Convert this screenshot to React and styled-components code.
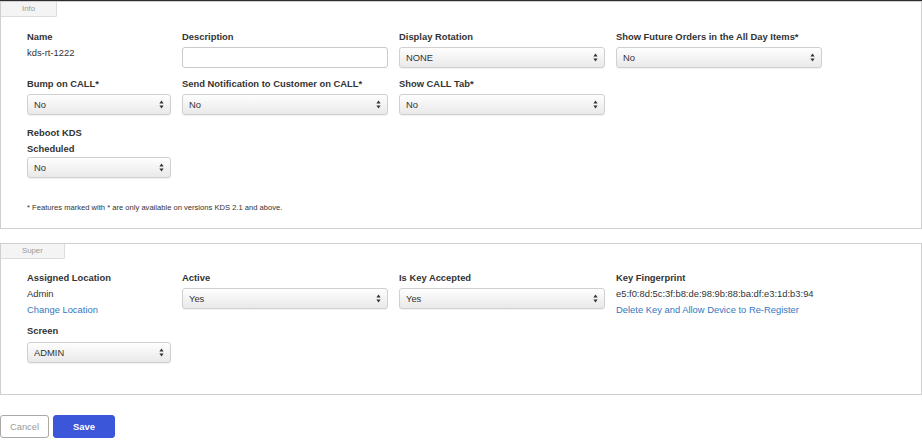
import React from 'react'
import styled, { createGlobalStyle } from 'styled-components'

const GlobalStyle = createGlobalStyle`
  html, body {
    margin: 0;
    padding: 0;
    background: #fff;
  }
  body {
    font-family: 'Liberation Sans', Arial, Helvetica, sans-serif;
    font-size: 9.4px;
    color: #333;
  }
`

const Page = styled.div`
  border-top: 1px solid #2b2d31;
  width: 922px;
  box-sizing: border-box;
`
const Panel = styled.section`
  border: 1px solid #cfcfcf;
  margin-top: ${(props) => props.top || 0}px;
  background: #fff;
`
const Tab = styled.div`
  display: inline-block;
  height: 14px;
  line-height: 14px;
  padding: 0 21px;
  background: #f4f4f4;
  border-right: 1px solid #dcdcdc;
  border-bottom: 1px solid #dcdcdc;
  border-bottom-right-radius: 2px;
  color: #9a9a9a;
  font-size: 7.8px;
  vertical-align: top;
`
const Body = styled.div`
  padding: ${(props) => props.pt}px 0 ${(props) => props.pb}px 26px;
`
const Row = styled.div`
  display: grid;
  grid-template-columns: 144px 206px 206px 206px;
  column-gap: 11px;
  align-items: start;
  margin-top: ${(props) => props.top || 0}px;
`
const Field = styled.div`
  display: flex;
  flex-direction: column;
`
const Label = styled.div`
  font-weight: bold;
  line-height: 12px;
  margin-top: ${(props) => props.top || 0}px;
  margin-bottom: ${(props) => (props.mb === undefined ? 4 : props.mb)}px;
  white-space: nowrap;
`
const Value = styled.div`
  line-height: 12px;
  margin-top: ${(props) => props.top || 0}px;
  white-space: nowrap;
`
const Link = styled.a`
  display: block;
  line-height: 12px;
  margin-top: 4px;
  color: #3577c2;
  text-decoration: none;
  white-space: nowrap;
  cursor: pointer;
`
const TextInput = styled.input`
  box-sizing: border-box;
  width: 100%;
  height: 21px;
  border: 1px solid #cacaca;
  border-radius: 3px;
  background: #fff;
  padding: 0 6px;
  font: inherit;
  outline: none;
`
const SelectWrap = styled.div`
  position: relative;
  width: 100%;
  height: 21px;
`
const NativeSelect = styled.select`
  appearance: none;
  -webkit-appearance: none;
  box-sizing: border-box;
  width: 100%;
  height: 21px;
  border: 1px solid #d0d0d0;
  border-radius: 3px;
  background: linear-gradient(#fefefe, #e9e9e9);
  box-shadow: 0 1px 1px rgba(0, 0, 0, 0.06);
  padding: 0 18px 0 6px;
  font: inherit;
  color: #333;
  outline: none;
`
const Arrows = styled.svg`
  position: absolute;
  right: 7px;
  top: 6px;
  pointer-events: none;
`
const Note = styled.div`
  font-size: 7.6px;
  line-height: 10px;
  margin-top: 25px;
`
const Actions = styled.div`
  display: flex;
  gap: 4px;
  padding-top: 20px;
`
const Button = styled.button`
  box-sizing: border-box;
  height: 23px;
  width: ${(props) => props.w}px;
  border-radius: 3px;
  font-family: inherit;
  font-size: 9.4px;
  cursor: pointer;
  border: 1px solid ${(props) => (props.primary ? '#3b56d9' : '#a9a9a9')};
  background: ${(props) => (props.primary ? '#3b56d9' : '#fff')};
  color: ${(props) => (props.primary ? '#fff' : '#9b9b9b')};
  font-weight: ${(props) => (props.primary ? 'bold' : 'normal')};
  padding: 0;
`

const Select = ({ value, options }) => (
  <SelectWrap>
    <NativeSelect defaultValue={value}>
      {(options || [value]).map((o) => (
        <option key={o}>{o}</option>
      ))}
    </NativeSelect>
    <Arrows width="5" height="9" viewBox="0 0 5 9">
      <path d="M2.5 0.5 L4.6 3.4 L0.4 3.4 Z" fill="#333" />
      <path d="M2.5 8.5 L4.6 5.6 L0.4 5.6 Z" fill="#333" />
    </Arrows>
  </SelectWrap>
)

const yesNo = ['No', 'Yes']

const App = () => (
  <Page>
    <GlobalStyle />
    <Panel>
      <Tab>Info</Tab>
      <Body pt={14} pb={15}>
        <Row>
          <Field>
            <Label>Name</Label>
            <Value>kds-rt-1222</Value>
          </Field>
          <Field>
            <Label>Description</Label>
            <TextInput type="text" />
          </Field>
          <Field>
            <Label>Display Rotation</Label>
            <Select value="NONE" options={['NONE', '90', '180', '270']} />
          </Field>
          <Field>
            <Label>Show Future Orders in the All Day Items*</Label>
            <Select value="No" options={yesNo} />
          </Field>
        </Row>
        <Row top={10}>
          <Field>
            <Label>Bump on CALL*</Label>
            <Select value="No" options={yesNo} />
          </Field>
          <Field>
            <Label>Send Notification to Customer on CALL*</Label>
            <Select value="No" options={yesNo} />
          </Field>
          <Field>
            <Label>Show CALL Tab*</Label>
            <Select value="No" options={yesNo} />
          </Field>
        </Row>
        <Row top={12}>
          <Field>
            <Label mb={0}>Reboot KDS</Label>
            <Label top={4} mb={2}>
              Scheduled
            </Label>
            <Select value="No" options={yesNo} />
          </Field>
        </Row>
        <Note>* Features marked with * are only available on versions KDS 2.1 and above.</Note>
      </Body>
    </Panel>

    <Panel top={14}>
      <Tab>Super</Tab>
      <Body pt={13} pb={31}>
        <Row>
          <Field>
            <Label>Assigned Location</Label>
            <Value>Admin</Value>
            <Link>Change Location</Link>
          </Field>
          <Field>
            <Label>Active</Label>
            <Select value="Yes" options={['Yes', 'No']} />
          </Field>
          <Field>
            <Label>Is Key Accepted</Label>
            <Select value="Yes" options={['Yes', 'No']} />
          </Field>
          <Field>
            <Label>Key Fingerprint</Label>
            <Value>e5:f0:8d:5c:3f:b8:de:98:9b:88:ba:df:e3:1d:b3:94</Value>
            <Link>Delete Key and Allow Device to Re-Register</Link>
          </Field>
        </Row>
        <Row top={9}>
          <Field>
            <Label mb={5}>Screen</Label>
            <Select value="ADMIN" options={['ADMIN', 'EXPO', 'PREP']} />
          </Field>
        </Row>
      </Body>
    </Panel>

    <Actions>
      <Button w={49}>Cancel</Button>
      <Button primary w={62}>
        Save
      </Button>
    </Actions>
  </Page>
)

export default App
